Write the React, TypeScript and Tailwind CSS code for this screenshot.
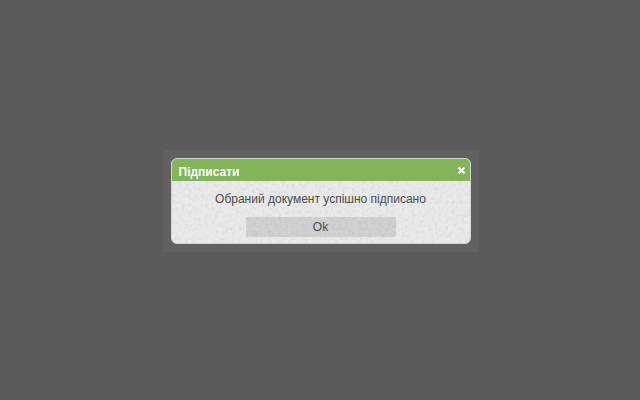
import { useState } from 'react';

function PaperGrain() {
  return (
    <svg className="absolute inset-0 w-full h-full pointer-events-none opacity-5" aria-hidden="true">
      <filter id="grain" x="0" y="0" width="100%" height="100%" colorInterpolationFilters="sRGB">
        <feTurbulence type="fractalNoise" baseFrequency="0.3" numOctaves="3" seed="4" />
        <feColorMatrix values="2 0 0 0 -0.15  2 0 0 0 -0.15  2 0 0 0 -0.15  0 0 0 0 1" />
      </filter>
      <rect width="100%" height="100%" filter="url(#grain)" />
    </svg>
  );
}

export default function App() {
  const [open, setOpen] = useState(true);
  const close = () => setOpen(false);

  return (
    <div className="min-h-screen flex items-center justify-center bg-[#5b5b5b] pt-px pl-px font-['Liberation_Sans',Arial,sans-serif]">
      {open && (
        <div className="w-full max-w-[316px] p-2 bg-[#616161]">
          <div
            role="dialog"
            aria-labelledby="dialog-title"
            aria-describedby="dialog-text"
            className="rounded-md border border-[#d0d5d0] bg-[#e8e8e8] overflow-hidden"
          >
            <div className="flex items-center justify-between h-[22px] pl-[7px] pr-1 pt-1 bg-[#82b45a] text-white">
              <h1 id="dialog-title" className="text-xs font-bold">Підписати</h1>
              <button type="button" aria-label="Закрити" onClick={close} className="pb-0.5">
                <svg width="9" height="9" viewBox="0 0 9 9" fill="none" stroke="currentColor" strokeWidth="2">
                  <path d="M1.5 1.5l6 6M7.5 1.5l-6 6" />
                </svg>
              </button>
            </div>
            <div className="relative px-4 pt-2.5 pb-1.5 text-center text-[#4c4c4c]">
              <PaperGrain />
              <p id="dialog-text" className="relative text-xs">Обраний документ успішно підписано</p>
              <button
                type="button"
                onClick={close}
                className="relative block mx-auto mt-2.5 w-[150px] h-5 bg-black/10 text-xs"
              >
                Ok
              </button>
            </div>
          </div>
        </div>
      )}
    </div>
  );
}
